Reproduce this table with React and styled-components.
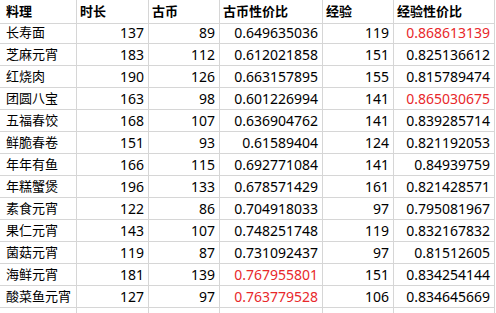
import React from "react";
import styled, { createGlobalStyle } from "styled-components";

const Global = createGlobalStyle`
  html, body { margin: 0; padding: 0; background: #fff; overflow: hidden; }
`;

const Sheet = styled.div`
  display: grid;
  grid-template-columns: 77px 72px 71px 103px 71px 101px;
  grid-auto-rows: 22px;
  width: 496px;
  height: 313px;
  overflow: hidden;
  font-family: "Noto Sans", "Noto Sans CJK SC", sans-serif;
  color: #000;
`;

const Cell = styled.div`
  box-sizing: border-box;
  border-right: 1px solid #d6d6d6;
  border-bottom: 1px solid #d6d6d6;
  display: flex;
  align-items: center;
  justify-content: ${(p) => (p.$num ? "flex-end" : "flex-start")};
  padding: ${(p) => (p.$first ? "0 0 0 6px" : p.$num ? "0 4px 0 0" : "0 0 0 3px")};
  font-size: ${(p) => (p.$num ? "14px" : "13px")};
  font-weight: ${(p) => (p.$head ? 700 : 400)};
  color: ${(p) => (p.$red ? "#e8282b" : "#000")};
  height: ${(p) => (p.$head ? "24px" : "22px")};
  white-space: nowrap;
  overflow: hidden;
  line-height: 1;
`;

const Row = styled.div`
  display: contents;
`;

const headers = ["料理", "时长", "古币", "古币性价比", "经验", "经验性价比"];

const rows = [
  ["长寿面", 137, 89, "0.649635036", 119, "0.868613139", false, true],
  ["芝麻元宵", 183, 112, "0.612021858", 151, "0.825136612"],
  ["红烧肉", 190, 126, "0.663157895", 155, "0.815789474"],
  ["团圆八宝", 163, 98, "0.601226994", 141, "0.865030675", false, true],
  ["五福春饺", 168, 107, "0.636904762", 141, "0.839285714"],
  ["鲜脆春卷", 151, 93, "0.61589404", 124, "0.821192053"],
  ["年年有鱼", 166, 115, "0.692771084", 141, "0.84939759"],
  ["年糕蟹煲", 196, 133, "0.678571429", 161, "0.821428571"],
  ["素食元宵", 122, 86, "0.704918033", 97, "0.795081967"],
  ["果仁元宵", 143, 107, "0.748251748", 119, "0.832167832"],
  ["菌菇元宵", 119, 87, "0.731092437", 97, "0.81512605"],
  ["海鲜元宵", 181, 139, "0.767955801", 151, "0.834254144", true],
  ["酸菜鱼元宵", 127, 97, "0.763779528", 106, "0.834645669", true],
];

export default function App() {
  return (
    <>
      <Global />
      <Sheet>
        <Row>
          {headers.map((h, i) => (
            <Cell key={h} $head $first={i === 0}>
              {h}
            </Cell>
          ))}
        </Row>
        {rows.map((r) => (
          <Row key={r[0]}>
            <Cell $first>{r[0]}</Cell>
            <Cell $num>{r[1]}</Cell>
            <Cell $num>{r[2]}</Cell>
            <Cell $num $red={r[6]}>{r[3]}</Cell>
            <Cell $num>{r[4]}</Cell>
            <Cell $num $red={r[7]}>{r[5]}</Cell>
          </Row>
        ))}
        <Row>
          {headers.map((h) => (
            <Cell key={"e" + h} />
          ))}
        </Row>
      </Sheet>
    </>
  );
}
